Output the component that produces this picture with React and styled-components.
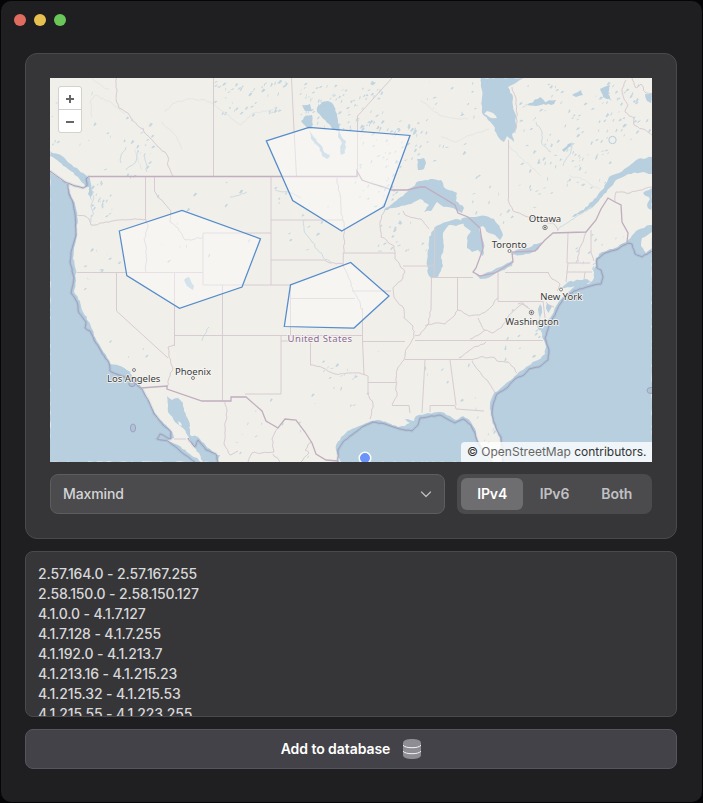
import React from "react";
import styled, { createGlobalStyle } from "styled-components";

const GlobalStyle = createGlobalStyle`
  * { box-sizing: border-box; }
  body {
    margin: 0;
    background: #050507;
    font-family: Inter, "Liberation Sans", sans-serif;
    overflow: hidden;
  }
  button { font: inherit; }
`;

const Window = styled.main`
  width: 701px;
  height: 801px;
  margin: 1px;
  border-radius: 10px;
  background: #1f1f21;
  display: flex;
  flex-direction: column;
`;

const TitleBar = styled.header`
  height: 52px;
  padding: 13px;
  display: flex;
  gap: 8px;
`;

const TrafficLight = styled.span`
  width: 12px;
  height: 12px;
  border-radius: 50%;
  background: ${(p) => p.$color};
`;

const Content = styled.div`
  width: 652px;
  margin-left: 24px;
  display: flex;
  flex-direction: column;
  gap: 12px;
`;

const Card = styled.section`
  height: 486px;
  padding: 24px;
  border: 1px solid #4a4a4d;
  border-radius: 12px;
  background: #363638;
  display: flex;
  flex-direction: column;
  gap: 12px;
`;

const MapFrame = styled.div`
  position: relative;
  width: 602px;
  height: 384px;
  overflow: hidden;
  background: #f0efea;
`;

const MapSvg = styled.svg`
  display: block;
  width: 602px;
  height: 384px;
`;

const ZoomControl = styled.div`
  position: absolute;
  top: 8px;
  left: 8px;
  width: 24px;
  height: 47px;
  border: 1px solid #d3d3cc;
  border-radius: 3px;
  overflow: hidden;
  display: flex;
  flex-direction: column;
  gap: 1px;
  background: #d0d0cd;
`;

const ZoomButton = styled.button`
  flex: 1;
  padding: 2px 0 0;
  border: 0;
  background: #fff;
  display: grid;
  place-items: center;
`;

const Attribution = styled.div`
  position: absolute;
  right: 0;
  bottom: 0;
  width: 191px;
  height: 20px;
  padding-left: 6px;
  border-radius: 4px 0 0 0;
  background: rgba(255, 255, 255, 0.78);
  color: #333;
  font-size: 12px;
  line-height: 20px;
  white-space: nowrap;
`;

const AttributionLink = styled.span`
  color: #666;
`;

const Controls = styled.div`
  display: flex;
  gap: 12px;
  height: 40px;
`;

const Select = styled.button`
  width: 395px;
  padding: 0 12px 1px;
  border: 1px solid #5d5d60;
  border-radius: 8px;
  background: #4b4b4d;
  color: #d5d5d7;
  font-size: 14px;
  font-weight: 500;
  letter-spacing: -0.1px;
  display: flex;
  align-items: center;
  justify-content: space-between;

  svg { margin-top: 1px; }
`;

const Segmented = styled.div`
  flex: 1;
  padding: 4px;
  border-radius: 8px;
  background: #4b4b4d;
  display: flex;
`;

const Segment = styled.button`
  flex: 1;
  padding: 0 0 1px;
  border: 0;
  border-radius: 6px;
  background: ${(p) => (p.$active ? "#6e6e71" : "transparent")};
  color: ${(p) => (p.$active ? "#fff" : "#c1c1c4")};
  font-size: 14px;
  font-weight: 600;
  letter-spacing: -0.1px;
`;

const RangeList = styled.ul`
  height: 166px;
  margin: 0;
  padding: 12px;
  border: 1px solid #4a4a4d;
  border-radius: 8px;
  background: #363638;
  overflow: hidden;
  list-style: none;
`;

const RangeItem = styled.li`
  color: #d8d8da;
  font-size: 14px;
  font-weight: 500;
  line-height: 20px;
  letter-spacing: -0.14px;
`;

const AddButton = styled.button`
  height: 40px;
  padding: 0 0 1px;
  border: 1px solid #55555d;
  border-radius: 8px;
  background: #434248;
  color: #fff;
  font-size: 14px;
  font-weight: 600;
  letter-spacing: -0.06px;
  display: flex;
  align-items: center;
  justify-content: center;
  gap: 13px;

  svg { margin-top: 1px; }
`;

const PlaceLabel = styled.text`
  font-family: "Noto Sans", sans-serif;
  font-size: 9.5px;
  text-anchor: middle;
  fill: ${(p) => (p.$country ? "#8a6a91" : "#3a3a3a")};
  letter-spacing: ${(p) => (p.$country ? "0.4px" : "0")};
  stroke: #f7f6f3;
  stroke-width: 1.6px;
  stroke-linejoin: round;
  paint-order: stroke;
`;

/* Deterministic pseudo-random numbers keep the terrain stable between renders. */
function generator(seed) {
  let s = seed;
  return () => {
    s = (s * 16807) % 2147483647;
    return s / 2147483647;
  };
}

/* Turns "x,y x,y ..." into a path, with natural-looking wiggle of size amp. */
function line(points, amp = 0, close = false) {
  const pts = points.trim().split(/\s+/).map((p) => p.split(",").map(Number));
  if (close) pts.push(pts[0]);
  const rnd = generator(Math.round(pts[0][0] * 31 + pts[0][1] * 17 + pts.length));
  let d = `M${pts[0][0]} ${pts[0][1]}`;
  for (let i = 1; i < pts.length; i++) {
    const [x0, y0] = pts[i - 1];
    const [x1, y1] = pts[i];
    const steps = amp ? Math.max(1, Math.round(Math.hypot(x1 - x0, y1 - y0) / 3)) : 1;
    for (let k = 1; k < steps; k++) {
      const t = k / steps;
      const x = x0 + (x1 - x0) * t + (rnd() - 0.5) * 2 * amp;
      const y = y0 + (y1 - y0) * t + (rnd() - 0.5) * 2 * amp;
      d += `L${x.toFixed(1)} ${y.toFixed(1)}`;
    }
    d += `L${x1} ${y1}`;
  }
  return close ? d + "Z" : d;
}

const OCEANS = [
  "50,172 58,178 66,183 69,190 73,200 76,208 77,216 77,235 74,248 73,258 76,270 76,281 74,292 80,301 83,312 89,322 92,329 94,336 100,346 106,355 110,364 120,366 128,371 134,378 140,385 143,391 148,400 153,410 158,418 166,425 172,432 174,438 166,441 178,445 190,454 201,462 50,462",
  "167,396 172,400 178,398 183,403 184,411 188,419 190,426 190,435 198,437 204,443 210,449 216,455 220,455 218,462 203,462 199,453 192,444 188,436 183,428 175,422 168,412",
  "341,462 337,453 336,445 341,437 350,430 362,425 371,421 380,420 388,423 398,427 405,426 410,423 405,419 414,421 416,416 428,413 441,412 450,416 456,420 463,416 471,422 476,431 478,441 484,452 490,462",
  "502,462 503,447 500,438 495,427 491,414 490,405 493,395 502,387 511,380 519,372 528,366 538,360 545,354 546,346 542,337 541,331 545,325 552,315 558,303 565,295 576,285 590,283 594,278 593,270 596,266 596,258 602,252 615,248 626,242 636,231 650,225 652,225 652,462",
];

const LAKES = [
  "481,78 482,98 482,113 488,120 493,125 499,138 504,142 507,136 514,142 512,134 516,130 516,117 513,106 513,97 508,87 514,84 524,78",
  "384,210 396,201 407,192 419,181 430,179 441,180 446,189 457,193 456,201 464,208 462,213 453,208 444,207 437,202 431,211 424,212 429,205 420,199 411,204 399,207",
  "428,274 427,260 429,248 429,237 435,227 446,222 456,219 465,222 456,226 449,225 443,233 444,246 441,258 443,266 438,277 431,278",
  "461,219 471,217 486,216 494,219 500,228 503,235 500,240 495,235 489,233 483,226 479,229 484,243 483,256 478,250 472,252 467,248 467,238 471,231 464,226",
  "473,271 480,276 488,272 500,267 513,260 512,266 499,272 488,278 480,279",
  "511,255 516,250 528,248 534,244 542,242 538,250 523,255",
  "652,157 638,159 629,166 619,173 609,177 602,190 594,199 588,206 579,212 569,218 580,214 594,206 604,194 616,180 629,174 643,172 652,174",
  "322,102 328,101 333,104 337,114 338,123 340,131 332,129 325,120 317,112 318,106",
  "309,130 316,139 321,145 324,152 330,155 327,159 322,156 318,146 311,139",
  "339,130 343,139 346,141 345,153 341,155 340,147 342,143 338,137",
  "417,159 424,158 426,163 424,169 418,170",
  "562,150 573,141 571,146 564,152",
  "50,151 62,156 69,163 77,168 83,173 90,178 91,188 94,192 91,197 93,203 88,194 89,187 85,186 78,177 68,169 57,160 50,156",
  "111,366 119,366 131,372 125,376 111,373",
  "643,193 652,188 652,213 647,205 650,199",
  "629,243 641,231 652,225 652,231 638,241 636,248",
  "537,324 540,318 538,309 540,304 542,310 540,319 543,331 539,330",
  "547,303 552,306 549,313 546,308",
  "562,288 568,282 585,279 592,282 577,287",
  "302,105 310,104 312,111 305,111", "304,117 312,115 313,125 308,129 301,121",
  "184,280 189,277 194,286 193,290 187,286",
  "527,105 540,97 546,103 536,106", "543,102 556,100 554,104 545,105",
  "572,95 581,90 583,95 576,97", "600,89 610,85 608,94 612,101 603,97",
  "645,94 652,93 651,103 647,101",
];

const COAST = [
  "50,171 58,177 65,182 75,186 83,188 87,186 86,179 89,176",
  "68,184 69,194 73,203 75,214 76,235 71,252 70,262 74,278 71,293 77,302 79,313 86,322 85,328 90,331 94,340 101,351 109,363 110,371 119,375 129,379 137,385 142,389 149,402 154,414 163,425 171,432 171,439 160,434 157,439 168,441 180,451 195,462",
  "188,438 195,447 198,440 206,450 216,454 218,462",
  "338,462 338,450 343,442 352,435 362,427 373,422 385,424 400,429 412,431 418,425 420,418 440,415 449,420 455,423 463,419 471,425 475,433 478,443 484,452 492,462",
  "503,462 502,447 501,437 496,428 492,415 493,405 497,394 508,387 515,379 524,375 529,369 539,367 548,360 549,350 545,338 549,326 556,312 563,299 574,291 594,285 601,284 603,277 601,270 597,268 597,259 605,253 618,249 628,243 632,244 635,254 642,257 652,251",
];

const INTL = [
  "88,176.5 357,176.5 357,171 362,180 373,184 384,187 392,190 407,190 420,187 425,187 455,205 458,213 468,217 480,228 483,249 476,268 473,272 480,276 495,273 513,262 512,252 535,251 545,240 553,233 586,232 596,220 601,209 608,198 615,202 621,205 622,222 628,233 627,242",
  "141,388 167,386 167,389 202,401 231,401 231,397 246,397 262,411 266,421 278,428 285,419 296,420 305,432 312,443 316,454 326,460 338,461",
];

const STRAIGHT_BORDERS = [
  "213.5,78 213.5,176", "291.5,78 294,130 296.5,176", "357.5,176 357.5,116 392,78",
  "271,177 271,285", "203,233 271,233", "203,233 203,285 291,285", "271,220 343,220",
  "271,260 323,260", "343,253 395,253", "145.5,177 145.5,219", "154.5,177 154.5,191 158,197",
  "77,272.5 203,272.5", "116.5,272 116.5,311 168,358", "174.5,272.5 174.5,346", "222.5,285 222.5,401",
  "174,335.5 362,335.5", "290.5,285 290.5,335", "290,298.5 355,298.5", "281,335 281,394 245,394",
  "281,341 310.5,341 310.5,365", "362.5,308 362.5,341 364,375", "362,341.5 405,341.5",
  "368,376 368,394", "368,382.5 396,382.5", "392,405.5 409,405.5 410,413", "405,359.5 473,359.5",
  "415,340.5 543,340.5", "425,360 422,413", "450,360 456,405", "430,412 430,405.5 455,405.5 456,409 484,411",
  "352,291 391,291", "403,266 434,266", "431,277.5 473,277.5", "431.5,277 431,310",
  "457.5,277 457.5,310", "498,269 498,301.5 543,301.5", "505,272.5 548,272.5",
  "568,233 567,263 590,263", "568,263 566,282", "567,272 592,272", "585,272 584,280", "591,230 591,252 594,261",
  "508.5,140 508.5,199", "434,277 435,227", "174,439 186,439", "543,301 545,318",
];

const RIVER_BORDERS = [
  "116.5,78 116.5,102 119,108 128,113 133,121 143,129 150,138 158,147 165,152 168,157 168,166 173,176",
  "77,215 85,216 89,219 91,225 103,223 120,220 146,219", "146,219 148,227 144,239 146,246 146,272",
  "158,196 164,203 171,211 170,222 178,228 185,240 195,239 203,237",
  "174,345 168,347 169,357 173,368 169,378 167,387", "337,178 340,195 341,214 344,222 344,253",
  "323,260 330,263 343,264 343,253", "385,210 380,222 381,237 394,246 395,259 405,272 401,281 393,288 394,297 404,309 404,318 413,326 414,337 407,348 404,360 397,370 396,386 397,396 392,405",
  "403,211 405,215 421,219 429,229", "343,264 350,280 353,291 358,299 362,310",
  "310,365 323,368 335,374 350,373 360,373 368,376", "368,394 373,404 370,419",
  "431,310 428,325 420,335 415,335", "425,326 435,323 445,324 455,315 458,310 469,316 480,315 491,307 498,298",
  "478,318 484,330 493,333 502,327 509,315 522,304 530,309", "470,339 480,334 485,330", "460,358 470,350 486,342",
  "472,361 479,371 489,383 495,393", "472,360 480,357 495,358 497,361 508,362 517,373",
  "548,272 552,279 560,284 557,291", "546,302 554,307", "586,232 583,242 579,250 576,263",
  "508,199 513,211 525,216 540,219 555,225 558,231", "615,202 616,192 630,193 642,190 652,187",
  "626,80 622,89 624,99 628,105 625,112 634,118 634,125 643,129 652,135", "632,78 636,88 641,84 646,93 652,94",
  "512,87 516,98 517,121 515,133", "225,402 227,411 225,427 224,444 230,455 238,451",
  "278,428 272,439 274,452 252,453 248,462", "273,454 280,462", "311,442 305,450 309,453 301,462", "528,307 523,303 518,304",
];

const ISLANDS = [
  { cx: 133, cy: 428, rx: 2.6, ry: 4 },
  { cx: 132, cy: 384, rx: 3.2, ry: 2.6 },
  { cx: 651, cy: 390.5, rx: 4, ry: 3 },
];

const STREAMS = [
  "304,220 304,230 312,242 323,257 331,262", "230,197 240,195 247,192", "558,230 571,220 592,207",
  "275,190 291,193 301,198", "126,170 135,163 138,150", "91,222 93,212 91,205 94,198 92,190",
  "563,166 571,151 572,144", "536,122 542,132 542,144 551,152", "121,163 121,155 126,147",
  "147,172 146,163 145,153", "202,341 206,333 209,327",
];

const FAINT_STREAMS = [
  "569,175 585,180 600,190", "92,78 103,87 109,89", "162,122 177,137 182,149",
  "92,117 90,101 96,95 112,103 125,114", "421,100 439,115 450,118 468,119",
  "508,145 523,160 541,176", "165,112 172,104 187,99 205,100 213,104 241,125 253,113 275,110",
  "441,137 455,142 471,135 489,129", "135,149 138,160 142,170",
];

const LAKE_FIELDS = [
  [215, 80, 72, 35, 50], [300, 80, 85, 50, 90], [360, 120, 62, 48, 60], [426, 80, 52, 90, 22],
  [520, 84, 92, 80, 75], [530, 145, 77, 50, 34], [607, 82, 44, 60, 35], [355, 175, 48, 34, 28],
  [105, 117, 50, 60, 25], [52, 82, 55, 65, 13], [90, 181, 22, 40, 20], [378, 212, 49, 40, 20],
  [85, 244, 45, 45, 11], [157, 182, 110, 95, 14], [312, 350, 72, 56, 20], [472, 174, 68, 60, 20],
  [275, 180, 65, 70, 12], [505, 305, 37, 55, 14], [576, 233, 52, 35, 20], [475, 392, 27, 65, 12],
  [236, 400, 73, 57, 12], [425, 345, 45, 60, 8], [110, 340, 40, 25, 4],
];

function smallLakes() {
  let d = "";
  LAKE_FIELDS.forEach(([x, y, w, h, count], field) => {
    const rnd = generator(917 + field * 43);
    for (let i = 0; i < count; i++) {
      const cx = x + rnd() * w;
      const cy = y + rnd() * h;
      const a = 0.5 + rnd() * 1.7;
      const b = 0.5 + rnd() * 1.1;
      const skew = (rnd() - 0.5) * 2;
      d += `M${cx - a} ${cy + b}l${a} ${-b * 2 + skew}l${a} ${b * 0.3 - skew}l${-a * 0.5} ${b}l${-a * 0.8} ${b}Z`;
    }
  });
  return d;
}

const LANDS = [
  "484,114 487,111 493,113 497,118 491,118",
  "641,246 642,238 652,232 652,248 646,253",
  "178,421 181,423 182,426 179,425",
  "189,427 192,426 191,431",
];

const CITIES = [
  { name: "Ottawa", x: 545, y: 222, px: 545, py: 227.5, capital: true },
  { name: "Toronto", x: 509.2, y: 248, px: 509.5, py: 251 },
  { name: "New York", x: 561.3, y: 299.5, px: 561, py: 289.5 },
  { name: "Washington", x: 532, y: 324.5, px: 531.5, py: 312.5, capital: true },
  { name: "Phoenix", x: 193, y: 374.5, px: 193, py: 378 },
  { name: "Los Angeles", x: 133.7, y: 381.5, px: 134, py: 370 },
];

const SELECTIONS = [
  "119.3,231 182,210.5 260.5,238.8 242,287 179.5,308.3 126.8,275.5",
  "266.3,140.8 309,127.5 410,135.5 384,206.5 341.7,231 292.7,200.5",
  "290.5,284.8 350.7,262.5 389,296 354,328 284.3,326.5",
];

const RANGES = [
  "2.57.164.0 - 2.57.167.255",
  "2.58.150.0 - 2.58.150.127",
  "4.1.0.0 - 4.1.7.127",
  "4.1.7.128 - 4.1.7.255",
  "4.1.192.0 - 4.1.213.7",
  "4.1.213.16 - 4.1.215.23",
  "4.1.215.32 - 4.1.215.53",
  "4.1.215.55 - 4.1.223.255",
];

function Terrain() {
  return (
    <MapSvg viewBox="50 78 602 384" role="img" aria-label="Map of the United States">
      <rect x="50" y="78" width="602" height="384" fill="#f0efea" />
      <g fill="#b7cfde">
        {OCEANS.map((p) => <path key={p} d={line(p, 0.8, true)} />)}
        {LAKES.map((p) => <path key={p} d={line(p, 0.8, true)} />)}
        <path d={smallLakes()} opacity="0.8" />
      </g>
      <g fill="#f0efea">
        {LANDS.map((p) => <path key={p} d={line(p, 0.4, true)} />)}
      </g>
      <g fill="none" strokeWidth="1">
        {FAINT_STREAMS.map((p) => <path key={p} d={line(p, 0.8)} stroke="#e4e7e6" />)}
        {STREAMS.map((p) => <path key={p} d={line(p, 1)} stroke="#cddce3" />)}
        <circle cx="612.5" cy="140" r="3.7" stroke="#b7cfde" />
      </g>
      <g fill="none" stroke="#d8ccd3" strokeWidth="1">
        {STRAIGHT_BORDERS.map((p) => <path key={p} d={line(p)} />)}
        {RIVER_BORDERS.map((p) => <path key={p} d={line(p, 0.8)} />)}
      </g>
      <g fill="none" stroke="#9da1bd" strokeLinejoin="round">
        {COAST.map((p) => (
          <React.Fragment key={p}>
            <path d={line(p, 0.4)} strokeWidth="3" opacity="0.22" />
            <path d={line(p, 0.4)} strokeWidth="1" />
          </React.Fragment>
        ))}
        {ISLANDS.map((i) => <ellipse key={i.cx} {...i} fill="#b0c3d6" />)}
      </g>
      <g fill="none" stroke="#c0adc0" strokeWidth="1.3">
        {INTL.map((p) => <path key={p} d={line(p)} />)}
      </g>
      {CITIES.map((c) => (
        <g key={c.name}>
          <circle cx={c.px} cy={c.py} r={c.capital ? 2.2 : 1.5} fill="#f7f6f3" stroke="#666" strokeWidth="0.8" />
          {c.capital && <circle cx={c.px} cy={c.py} r="0.9" fill="#555" />}
          <PlaceLabel x={c.x} y={c.y}>{c.name}</PlaceLabel>
        </g>
      ))}
      <PlaceLabel $country x="320" y="341.5">United States</PlaceLabel>
      {SELECTIONS.map((p) => (
        <polygon key={p} points={p} fill="rgba(255,255,255,.4)" stroke="#568cca" strokeWidth="1.25" />
      ))}
      <circle cx="365" cy="458" r="5.75" fill="#6b94f8" stroke="#fff" strokeWidth="1.5" />
    </MapSvg>
  );
}

function Chevron() {
  return (
    <svg width="12" height="12" viewBox="0 0 12 12" fill="none" stroke="#bbbbbe" strokeWidth="1.3" strokeLinecap="round" strokeLinejoin="round">
      <path d="M1.5 4 6 8.5 10.5 4" />
    </svg>
  );
}

function DatabaseIcon() {
  return (
    <svg width="18" height="20" viewBox="0 0 18 20">
      <path d="M0 3.8C0 1.5 4 0 9 0s9 1.5 9 3.8v12.4C18 18.5 14 20 9 20s-9-1.5-9-3.8Z" fill="#8e8d93" />
      <path d="M0 6.2c1.3 1.7 4.6 2.5 9 2.5s7.7-.8 9-2.5M0 12.2c1.3 1.7 4.6 2.5 9 2.5s7.7-.8 9-2.5" fill="none" stroke="#f4f4f5" strokeWidth="1" />
    </svg>
  );
}

export default function App() {
  return (
    <>
      <GlobalStyle />
      <Window>
        <TitleBar>
          <TrafficLight $color="#df6c5f" />
          <TrafficLight $color="#e7c14f" />
          <TrafficLight $color="#6ac658" />
        </TitleBar>
        <Content>
          <Card>
            <MapFrame>
              <Terrain />
              <ZoomControl>
                <ZoomButton aria-label="Zoom in">
                  <svg width="10" height="10" viewBox="0 0 10 10" stroke="#666" strokeWidth="2"><path d="M1 5h8M5 1v8" /></svg>
                </ZoomButton>
                <ZoomButton aria-label="Zoom out">
                  <svg width="10" height="10" viewBox="0 0 10 10" stroke="#666" strokeWidth="2"><path d="M1 5h8" /></svg>
                </ZoomButton>
              </ZoomControl>
              <Attribution>
                © <AttributionLink>OpenStreetMap</AttributionLink> contributors.
              </Attribution>
            </MapFrame>
            <Controls>
              <Select>Maxmind<Chevron /></Select>
              <Segmented>
                <Segment $active>IPv4</Segment>
                <Segment>IPv6</Segment>
                <Segment>Both</Segment>
              </Segmented>
            </Controls>
          </Card>
          <RangeList>
            {RANGES.map((range) => <RangeItem key={range}>{range}</RangeItem>)}
          </RangeList>
          <AddButton>Add to database<DatabaseIcon /></AddButton>
        </Content>
      </Window>
    </>
  );
}
